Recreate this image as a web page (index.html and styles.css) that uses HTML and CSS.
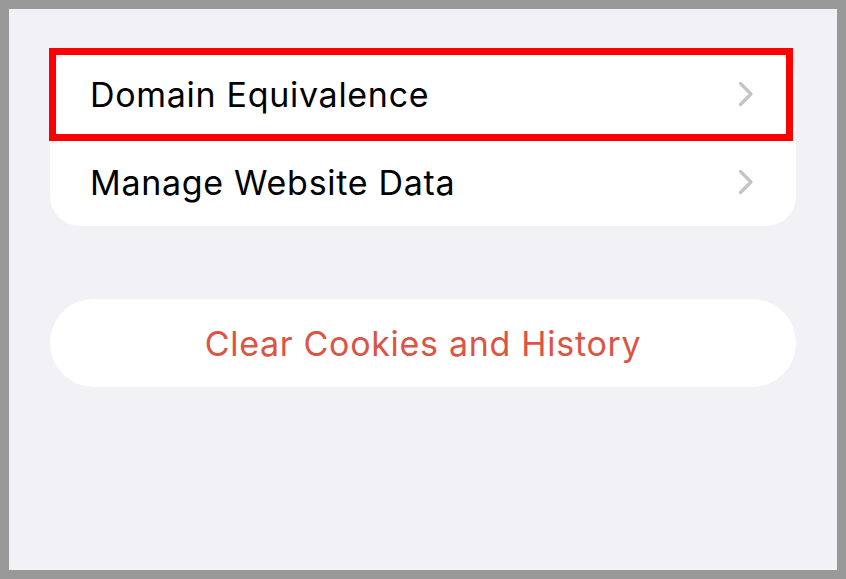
FILE: index.html
```html
<!DOCTYPE html>
<html lang="en">

<head>
    <meta charset="UTF-8">
    <meta name="viewport" content="width=device-width, initial-scale=1.0">
    <title>Advanced</title>
    <link rel="stylesheet" href="styles.css">
</head>

<body>
    <main class="screen">
        <!-- Lista de ajustes -->
        <section class="group">
            <div class="row row-highlight">
                <span class="row-label">Domain Equivalence</span>
                <svg class="chevron" width="16" height="26" viewBox="0 0 16 26">
                    <path d="M2.5 2.5 L13 13 L2.5 23.5" fill="none" stroke="#c4c4c7" stroke-width="3.2" stroke-linecap="round" stroke-linejoin="round"/>
                </svg>
                <div class="highlight"></div>
            </div>
            <div class="row">
                <span class="row-label">Manage Website Data</span>
                <svg class="chevron" width="16" height="26" viewBox="0 0 16 26">
                    <path d="M2.5 2.5 L13 13 L2.5 23.5" fill="none" stroke="#c4c4c7" stroke-width="3.2" stroke-linecap="round" stroke-linejoin="round"/>
                </svg>
            </div>
        </section>

        <!-- Botón destructivo -->
        <button class="danger-button">Clear Cookies and History</button>
    </main>
</body>

</html>
```

FILE: styles.css
```css
body {
    margin: 0;
    background-color: #999999;
    padding: 9px;
    font-family: Inter, "Noto Sans", sans-serif;
}

.screen {
    background-color: #f2f1f6;
    height: 561px;
    padding: 41px 41px 0 41px;
    box-sizing: border-box;
    display: flex;
    flex-direction: column;
}

/* Grupo */
.group {
    background: white;
    border-radius: 30px;
}

.row {
    position: relative;
    display: flex;
    align-items: center;
    justify-content: space-between;
    height: 88px;
    padding: 0 42px 0 40px;
}

.row-label {
    font-size: 34px;
    color: black;
    letter-spacing: 0.7px;
}

.chevron {
    display: block;
}

.highlight {
    position: absolute;
    left: -1px;
    top: -2px;
    right: 3px;
    bottom: -3px;
    border: 7px solid #ff0000;
    pointer-events: none;
}

/* Botón */
.danger-button {
    margin-top: 73px;
    height: 88px;
    border: none;
    border-radius: 44px;
    background: white;
    color: #dc5444;
    font-family: Inter, "Noto Sans", sans-serif;
    font-size: 34px;
    letter-spacing: 0.7px;
}
```
